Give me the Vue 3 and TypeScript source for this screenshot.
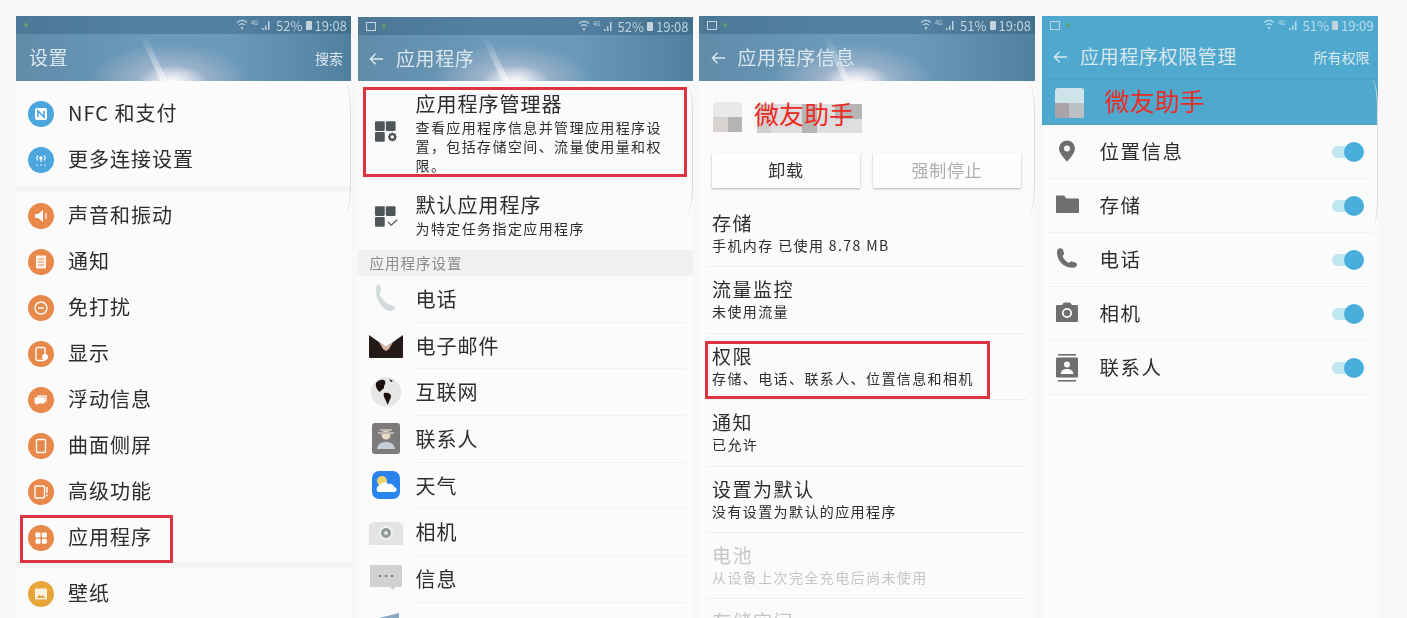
<script setup lang="ts">
type SettingRow = { label: string; icon: string; tone: 'blue' | 'orange' | 'amber' }
type AppRow = { label: string; icon: string }
type InfoRow = { title: string; sub: string; off?: boolean }

const settingGroups: SettingRow[][] = [
  [
    { label: 'NFC 和支付', icon: 'nfc', tone: 'blue' },
    { label: '更多连接设置', icon: 'more', tone: 'blue' },
  ],
  [
    { label: '声音和振动', icon: 'sound', tone: 'orange' },
    { label: '通知', icon: 'notify', tone: 'orange' },
    { label: '免打扰', icon: 'dnd', tone: 'orange' },
    { label: '显示', icon: 'display', tone: 'orange' },
    { label: '浮动信息', icon: 'float', tone: 'orange' },
    { label: '曲面侧屏', icon: 'edge', tone: 'orange' },
    { label: '高级功能', icon: 'advanced', tone: 'orange' },
    { label: '应用程序', icon: 'apps', tone: 'orange' },
  ],
  [{ label: '壁纸', icon: 'wallpaper', tone: 'amber' }],
]

const appRows: AppRow[] = [
  { label: '电话', icon: 'phone' },
  { label: '电子邮件', icon: 'mail' },
  { label: '互联网', icon: 'globe' },
  { label: '联系人', icon: 'contact' },
  { label: '天气', icon: 'weather' },
  { label: '相机', icon: 'camera' },
  { label: '信息', icon: 'message' },
  { label: '', icon: 'partial' },
]

const infoRows: InfoRow[] = [
  { title: '存储', sub: '手机内存 已使用 8.78 MB' },
  { title: '流量监控', sub: '未使用流量' },
  { title: '权限', sub: '存储、电话、联系人、位置信息和相机' },
  { title: '通知', sub: '已允许' },
  { title: '设置为默认', sub: '没有设置为默认的应用程序' },
  { title: '电池', sub: '从设备上次完全充电后尚未使用', off: true },
  { title: '存储空间', sub: '', off: true },
]

const permRows: AppRow[] = [
  { label: '位置信息', icon: 'pin' },
  { label: '存储', icon: 'folder' },
  { label: '电话', icon: 'call' },
  { label: '相机', icon: 'cam' },
  { label: '联系人', icon: 'book' },
]

// wifi fan, tiny 4G tag and signal steps
const statusIcons =
  '<g fill="none" stroke="currentColor" stroke-width="1.1"><path d="M1 3.5c3-2.5 7-2.5 10 0M3 6c2-1.5 4-1.5 6 0"/></g>' +
  '<path d="M6 11L4.5 8h3z" fill="currentColor"/>' +
  '<text x="15" y="6" font-size="6" fill="currentColor">4G</text>' +
  '<path d="M26 11h1.5V9H26zM29 11h1.5V6.5H29zM32 11h1.5V2H32z" fill="currentColor"/>'

const glyphs: Record<string, string> = {
  nfc: '<rect x="7" y="7" width="12" height="12" rx="2" fill="#fff"/><path d="M10 16v-6l6 6v-6" fill="none" stroke="#4aa6dc" stroke-width="1.6"/>',
  more: '<g fill="none" stroke="#fff" stroke-width="1.1"><path d="M10 8.5c-1.5 1.5-1.5 3.5 0 5M16 8.5c1.5 1.5 1.5 3.5 0 5"/><circle cx="13" cy="11" r="1.2" fill="#fff"/><path d="M13 12v3"/><path d="M8.5 18h1M12.5 18h1M16.5 18h1" stroke-width="1.4"/></g>',
  sound: '<path d="M7 11h3l5-4v12l-5-4H7z" fill="#fff"/><rect x="17" y="10" width="2" height="6" fill="#fff" opacity=".6"/>',
  notify: '<rect x="8" y="6.5" width="10" height="13" rx="1" fill="#fff" opacity=".9"/><path d="M10 10h6M10 13h6M10 16h6" stroke="#e8884a" stroke-width="1"/>',
  dnd: '<circle cx="13" cy="13" r="6" fill="none" stroke="#fff" stroke-width="1.4"/><path d="M10 13h6" stroke="#fff" stroke-width="1.4"/>',
  display: '<rect x="8" y="6.5" width="9" height="13" rx="1.5" fill="none" stroke="#fff" stroke-width="1.4"/><circle cx="17" cy="16" r="3" fill="#fff"/>',
  float: '<rect x="9" y="8" width="10" height="7" fill="#fff" opacity=".65"/><path d="M6.5 10.5h10v6h-6l-2 2v-2h-2z" fill="#fff"/>',
  edge: '<rect x="8.5" y="6.5" width="9" height="13" rx="1" fill="none" stroke="#fff" stroke-width="1.4"/>',
  advanced: '<rect x="7" y="7" width="9.5" height="12" rx="1" fill="none" stroke="#fff" stroke-width="1.4"/><path d="M19 8v6" stroke="#fff" stroke-width="1.4"/><circle cx="19" cy="16.5" r=".9" fill="#fff"/>',
  apps: '<g fill="#fff"><rect x="7.5" y="7.5" width="5" height="5" rx="1"/><rect x="13.8" y="7.5" width="5" height="5" rx="1"/><rect x="7.5" y="13.8" width="5" height="5" rx="1"/><rect x="13.8" y="13.8" width="5" height="5" rx="1"/></g>',
  wallpaper: '<rect x="7" y="7.5" width="12" height="11" rx="1" fill="#fff" opacity=".85"/><path d="M8.5 17l3-3.5 2 2 1.5-1.5 2.5 3z" fill="#e8a63a"/>',
  phone: '<path d="M8 3c3-1 3 1 4 4 .8 3-2 3-1 6 1 3 4 6 8 9 3 2 5 1 7 3 1 2-2 4-5 4C12 28 4 13 8 3z" fill="#d3dcdd"/>',
  mail: '<path d="M0 6l17 12L34 6v22a1 1 0 0 1-1 1H1a1 1 0 0 1-1-1z" fill="#241a1a"/><path d="M10 13l7 5 7-5-4 7-3 2-3-2z" fill="#d8b8a4"/>',
  globe: '<circle cx="17" cy="16" r="15" fill="#e6e6e6"/><path d="M7 7c3-4 8-4 9-2 1 3-1 4-1 6 0 3-3 2-4 5-2-1-5-5-4-9zM15 17c4-1 7 1 7 3 0 3-2 4-3 9-2-3-2-5-3-6-1-2-2-4-1-6zM20 3l4 2-2 1z" fill="#1e0d0f"/>',
  contact: '<rect x="3" y="1" width="28" height="31" rx="3" fill="#7c7a7a"/><circle cx="17" cy="13" r="4.5" fill="#e8dcc8"/><path d="M9 11h16M11 8h12" stroke="#bcb6b0" stroke-width="2"/><path d="M8 27c1-6 5-7 9-7s8 1 9 7z" fill="#c6ced8"/>',
  weather: '<rect x="3" y="2" width="28" height="28" rx="7" fill="#2a84ee"/><circle cx="13" cy="12" r="5" fill="#f2d36a"/><path d="M9 23a4 4 0 0 1 2-7c1-3 6-4 8-1 3-1 6 1 6 3 3 0 4 5 0 5z" fill="#fff"/>',
  camera: '<path d="M0 8l6-2h22l6 2v20a1 1 0 0 1-1 1H1a1 1 0 0 1-1-1z" fill="#e3e3e1"/><circle cx="17" cy="17" r="7" fill="#f2f2f0"/><circle cx="17" cy="17" r="5" fill="#8e9a98"/><circle cx="17" cy="17" r="2" fill="#dfe6e4"/>',
  message: '<path d="M1 3h32v22h-7l-2 3-3-3H1z" fill="#d2d0d3"/><g fill="#555"><circle cx="11" cy="14" r="1"/><circle cx="17" cy="14" r="1"/><circle cx="23" cy="14" r="1"/></g>',
  partial: '<path d="M10 9l20-5v20H10z" fill="#8aa7c4"/>',
  pin: '<path d="M12 2.5a8 8 0 0 0-8 8c0 5.5 8 13 8 13s8-7.5 8-13a8 8 0 0 0-8-8zm0 11a3 3 0 1 1 0-6 3 3 0 0 1 0 6z" fill="#6f6f6f"/>',
  folder: '<path d="M1 4.5a1 1 0 0 1 1-1h7l2.5 3H23a1 1 0 0 1 1 1V20a1 1 0 0 1-1 1H2a1 1 0 0 1-1-1z" fill="#6f6f6f"/>',
  call: '<path d="M3 3c2-1.5 4-1 5 1l1 3c.3 1.3-.5 2-1.5 3 1 3 3.5 5.5 6.5 7 1-1 2-2 3-1.6l3.5 1.100c1.5.5 2 2 1 3.5-1 1.600-3 2-5.500 1.400C9 22 2 14 2 7c0-1.500.3-3 1-4z" fill="#6f6f6f"/>',
  cam: '<path d="M2 5h5l2-2.5h6L17 5h5a1 1 0 0 1 1 1v15a1 1 0 0 1-1 1H2a1 1 0 0 1-1-1V6a1 1 0 0 1 1-1z" fill="#6f6f6f"/><circle cx="12" cy="13" r="4.2" fill="none" stroke="#fbfbfb" stroke-width="1.8"/>',
  book: '<rect x="3" y="0" width="18" height="1.6" fill="#6f6f6f"/><rect x="3" y="26" width="18" height="1.6" fill="#6f6f6f"/><rect x="1" y="3.5" width="22" height="20" rx="1" fill="#6f6f6f"/><circle cx="12" cy="10.5" r="3" fill="#fbfbfb"/><path d="M5.5 20c.5-4 3.5-5 6.5-5s6 1 6.5 5z" fill="#fbfbfb"/>',
}
</script>

<template>
  <div class="page">
    <!-- settings list -->
    <section class="panel">
      <div class="screen">
        <header class="bar sky">
          <div class="status">
            <i class="dot"></i>
            <span class="status-right">
              <svg class="wifi" viewBox="0 0 36 12" v-html="statusIcons"></svg>
              <span>52%</span><i class="batt"></i><span>19:08</span>
            </span>
          </div>
          <div class="title-row first-title">
            <span class="title">设置</span>
            <span class="action">搜索</span>
          </div>
        </header>
        <div class="settings">
          <div v-for="(group, g) in settingGroups" :key="g" class="group">
            <div v-for="row in group" :key="row.label" class="setting">
              <svg class="badge" :class="row.tone" viewBox="0 0 26 26" v-html="glyphs[row.icon]"></svg>
              <span class="setting-label">{{ row.label }}</span>
            </div>
          </div>
        </div>
      </div>
      <i class="curve curve-settings"></i>
      <div class="mark mark-apps"></div>
    </section>

    <!-- applications -->
    <section class="panel panel-low">
      <div class="screen">
        <header class="bar sky bar-low">
          <div class="status">
            <i class="shot"></i><i class="dot"></i>
            <span class="status-right">
              <svg class="wifi" viewBox="0 0 36 12" v-html="statusIcons"></svg>
              <span>52%</span><i class="batt"></i><span>19:08</span>
            </span>
          </div>
          <div class="title-row">
            <svg class="back" viewBox="0 0 16 14"><path d="M15 7H2M7 1.5L1.5 7 7 12.5" fill="none" stroke="#dce8ee" stroke-width="1.5"/></svg>
            <span class="title">应用程序</span>
          </div>
        </header>
        <div class="manager">
          <div class="tile-slot">
            <svg class="tiles" viewBox="0 0 24 20">
              <g fill="#4f5659"><rect x="0" y="0" width="9" height="9" rx="1"/><rect x="10" y="0" width="9" height="9" rx="1"/><rect x="0" y="10" width="9" height="9" rx="1"/></g>
              <circle cx="16" cy="14.5" r="2.6" fill="none" stroke="#4f5659" stroke-width="2"/>
              <path d="M16 10.5v1.2M16 17.5v1.2M12 14.5h1.2M18.8 14.5H20M13.2 11.7l.9.9M18 16.5l.9.9M13.2 17.3l.9-.9M18 12.5l.9-.9" stroke="#4f5659" stroke-width="1.2"/>
            </svg>
          </div>
          <div class="manager-text">
            <div class="big">应用程序管理器</div>
            <div class="small">查看应用程序信息并管理应用程序设置，包括存储空间、流量使用量和权限。</div>
          </div>
        </div>
        <div class="manager default">
          <div class="tile-slot">
            <svg class="tiles" viewBox="0 0 24 20">
              <g fill="#4f5659"><rect x="0" y="0" width="9" height="9" rx="1"/><rect x="10" y="0" width="9" height="9" rx="1"/><rect x="0" y="10" width="9" height="9" rx="1"/></g>
              <path d="M12 14.5l3 3 5.5-5" fill="none" stroke="#4f5659" stroke-width="1.2"/>
            </svg>
          </div>
          <div class="manager-text">
            <div class="big">默认应用程序</div>
            <div class="small">为特定任务指定应用程序</div>
          </div>
        </div>
        <div class="section-head">应用程序设置</div>
        <div v-for="row in appRows" :key="row.icon" class="app-row">
          <svg class="app-icon" viewBox="0 0 34 34" v-html="glyphs[row.icon]"></svg>
          <span class="app-label">{{ row.label }}</span>
        </div>
      </div>
      <i class="curve curve-manager"></i>
      <div class="mark mark-manager"></div>
    </section>

    <!-- application info -->
    <section class="panel">
      <div class="screen">
        <header class="bar sky">
          <div class="status">
            <i class="shot"></i><i class="dot"></i>
            <span class="status-right">
              <svg class="wifi" viewBox="0 0 36 12" v-html="statusIcons"></svg>
              <span>51%</span><i class="batt"></i><span>19:08</span>
            </span>
          </div>
          <div class="title-row">
            <svg class="back" viewBox="0 0 16 14"><path d="M15 7H2M7 1.5L1.5 7 7 12.5" fill="none" stroke="#dce8ee" stroke-width="1.5"/></svg>
            <span class="title">应用程序信息</span>
          </div>
        </header>
        <div class="app-head">
          <div class="app-thumb"><i></i><i></i></div>
          <div class="mosaic"><i></i><i></i><i></i></div>
        </div>
        <div class="buttons">
          <div class="btn">卸载</div>
          <div class="btn off">强制停止</div>
        </div>
        <div class="info-list">
          <div v-for="row in infoRows" :key="row.title" class="info-row" :class="{ off: row.off }">
            <div class="info-title">{{ row.title }}</div>
            <div class="info-sub">{{ row.sub }}</div>
          </div>
        </div>
      </div>
      <i class="curve curve-info"></i>
      <div class="stamp stamp-info">微友助手</div>
      <div class="mark mark-perm"></div>
    </section>

    <!-- permission manager -->
    <section class="panel">
      <div class="screen">
        <header class="bar flat">
          <div class="status">
            <i class="shot"></i><i class="dot"></i>
            <span class="status-right">
              <svg class="wifi" viewBox="0 0 36 12" v-html="statusIcons"></svg>
              <span>51%</span><i class="batt"></i><span>19:09</span>
            </span>
          </div>
          <div class="title-row title-perm">
            <svg class="back" viewBox="0 0 16 14"><path d="M15 7H2M7 1.5L1.5 7 7 12.5" fill="none" stroke="#dce8ee" stroke-width="1.5"/></svg>
            <span class="title">应用程序权限管理</span>
            <span class="action">所有权限</span>
          </div>
          <div class="sub-bar">
            <div class="app-thumb thumb-blue"><i></i><i></i></div>
          </div>
        </header>
        <div v-for="row in permRows" :key="row.icon" class="perm-row">
          <svg class="perm-icon" viewBox="0 0 24 28" v-html="glyphs[row.icon]"></svg>
          <span class="perm-label">{{ row.label }}</span>
          <span class="toggle"><i></i></span>
        </div>
      </div>
      <i class="curve curve-perm"></i>
      <div class="stamp stamp-perm">微友助手</div>
    </section>
  </div>
</template>

<style>
html,
body {
  margin: 0;
  background: #f8f8f8;
}
</style>

<style scoped>
.page {
  height: 618px;
  box-sizing: border-box;
  padding: 16px 0 0 16px;
  display: grid;
  grid-template-columns: 335px 335px 336px 336px;
  column-gap: 6.5px;
  overflow: hidden;
  font-family: "Noto Sans CJK SC", "Noto Sans", sans-serif;
  color: #2b2e30;
  background: #f8f8f8;
}
.panel {
  position: relative;
  height: 602px;
  overflow: hidden;
  background: #fbfbfb;
}
.screen {
  height: 100%;
  filter: blur(0.35px);
}
.panel-low .screen {
  padding-top: 1px;
  box-sizing: border-box;
}

/* top bars */
.bar {
  color: #dbe7ee;
}
.sky {
  position: relative;
  height: 65px;
  background:
    radial-gradient(ellipse 34px 16px at 47% 100%, rgba(255, 255, 255, 0.92), rgba(255, 255, 255, 0) 100%),
    radial-gradient(ellipse 80px 38px at 46% 100%, rgba(222, 214, 228, 0.7), rgba(222, 214, 228, 0) 100%),
    linear-gradient(90deg, #608ba9, #6c9aba 40%, #6b99b9 65%, #50809f);
}
.sky::after {
  content: "";
  position: absolute;
  left: 40%;
  top: 20px;
  width: 7px;
  height: 45px;
  transform: skewX(25deg);
  background: linear-gradient(180deg, rgba(255, 255, 255, 0), rgba(255, 255, 255, 0.55));
}
.bar-low {
  height: 64px;
}
.flat {
  background: #4fa9cf;
}
.status {
  height: 18px;
  display: flex;
  align-items: center;
  gap: 6px;
  padding: 0 4px 0 8px;
  font-size: 13px;
  color: #bfd2dd;
  background: rgba(40, 84, 116, 0.35);
}
.flat .status {
  background: none;
  color: #b8dcea;
}
.status-right {
  margin-left: auto;
  display: flex;
  align-items: center;
  gap: 3px;
}
.wifi {
  width: 36px;
  height: 12px;
  margin-right: 1px;
}
.dot {
  width: 4px;
  height: 4px;
  border-radius: 50%;
  background: #5f9f6a;
}
.shot {
  width: 10px;
  height: 9px;
  border: 1px solid #c3d4de;
  box-sizing: border-box;
}
.batt {
  width: 6px;
  height: 9px;
  background: #c3d4de;
  border-radius: 1px;
}
.title-row {
  position: relative;
  z-index: 1;
  height: 47px;
  display: flex;
  align-items: center;
  padding: 0 8px 0 11.5px;
  gap: 12px;
}
.first-title {
  padding-left: 13px;
}
.title {
  font-size: 19px;
  letter-spacing: 0.6px;
  margin-top: -2px;
}
.action {
  margin-left: auto;
  font-size: 14px;
}
.back {
  width: 15px;
  height: 14px;
}

/* settings list */
.settings {
  padding-top: 10px;
}
.group {
  border-bottom: 6px solid #f4f4f4;
  padding-bottom: 3px;
  margin-bottom: 1px;
}
.group:nth-child(2) {
  padding-bottom: 1px;
  margin-bottom: 3px;
}
.setting {
  height: 46px;
  display: flex;
  align-items: center;
  gap: 14px;
  padding-left: 12px;
  font-size: 20px;
  letter-spacing: 1px;
}
.setting-label {
  margin-top: -3px;
}
.badge {
  width: 26px;
  height: 26px;
  border-radius: 50%;
  flex: none;
}
.blue {
  background: #4aa6dc;
}
.orange {
  background: #e8884a;
}
.amber {
  background: #e8a63a;
}

/* applications list */
.manager {
  display: flex;
  height: 105px;
  box-sizing: border-box;
  padding-top: 12px;
}
.default {
  height: 64px;
  padding-top: 8px;
}
.tile-slot {
  width: 58px;
  flex: none;
  display: flex;
  align-items: center;
  justify-content: center;
  height: 78px;
  padding-left: 3px;
  box-sizing: border-box;
}
.default .tile-slot {
  height: 46px;
}
.tiles {
  width: 26px;
  height: 22px;
}
.big {
  font-size: 20px;
  line-height: 24px;
  letter-spacing: 1px;
  margin-top: -1px;
}
.small {
  width: 252px;
  font-size: 14px;
  line-height: 19px;
  letter-spacing: 1.4px;
  margin-top: 2px;
}
.section-head {
  height: 26px;
  line-height: 26px;
  background: #f1f1f1;
  padding-left: 12px;
  font-size: 14.5px;
  letter-spacing: 1px;
  color: #8b8b8b;
}
.app-row {
  height: 46.7px;
  display: flex;
  align-items: center;
  position: relative;
}
.app-row::after {
  content: "";
  position: absolute;
  left: 55px;
  right: 8px;
  bottom: 0;
  border-bottom: 1px solid #f0f0f0;
}
.app-icon {
  width: 34px;
  height: 34px;
  flex: none;
  margin: 0 13px 0 11px;
}
.app-label {
  font-size: 20px;
  letter-spacing: 1px;
  margin-top: -2px;
}

/* application info */
.app-head {
  height: 72px;
  display: flex;
  align-items: center;
  padding-left: 14px;
  gap: 15px;
}
.app-thumb {
  width: 29px;
  height: 30px;
  border-radius: 3px;
  background: linear-gradient(180deg, #e9e9e9 50%, #c8c8c8 50%);
  display: flex;
  align-items: flex-end;
}
.app-thumb i {
  width: 50%;
  height: 50%;
  background: #d8d2d0;
}
.app-thumb i + i {
  background: #b4b4b4;
}
.thumb-blue {
  margin-left: 13px;
  background: linear-gradient(180deg, #cfe3ea 50%, #b9c4c9 50%);
}
.thumb-blue i {
  background: #a9a4a8;
}
.thumb-blue i + i {
  background: #bcc0c4;
}
.mosaic {
  position: relative;
  width: 105px;
  height: 43px;
  background: linear-gradient(180deg, #fbfbfb 18%, #dedede 18%, #dedede 86%, #fbfbfb 86%);
}
.mosaic i {
  position: absolute;
  background: #b5b5b5;
}
.mosaic i:nth-child(1) {
  left: 45px;
  top: 8px;
  width: 15px;
  height: 29px;
}
.mosaic i:nth-child(2) {
  left: 78px;
  top: 8px;
  width: 27px;
  height: 15px;
}
.mosaic i:nth-child(3) {
  left: 0;
  top: 8px;
  width: 14px;
  height: 29px;
  background: #cfcfcf;
}
.buttons {
  display: grid;
  grid-template-columns: 148px 148px;
  column-gap: 13px;
  padding: 0 14px 13px 13px;
}
.btn {
  height: 35px;
  line-height: 33px;
  text-align: center;
  font-size: 17px;
  letter-spacing: 0.8px;
  color: #333;
  background: #fdfdfd;
  box-shadow: 0 1px 2px rgba(0, 0, 0, 0.28);
}
.btn.off {
  color: #aeaeae;
}
.info-list {
  padding: 0 8px;
}
.info-row {
  height: 66.4px;
  box-sizing: border-box;
  padding: 9px 0 0 5px;
  border-bottom: 1px solid #eeeeee;
}
.info-title {
  font-size: 19px;
  line-height: 26px;
  letter-spacing: 1.5px;
}
.info-sub {
  font-size: 14px;
  line-height: 20px;
  letter-spacing: 1.4px;
  margin-top: -1px;
}
.info-row.off {
  color: #c6c6c6;
}

/* permissions */
.title-perm {
  height: 45px;
}
.sub-bar {
  height: 46px;
  display: flex;
  align-items: center;
  border-top: 1px solid #49a2c6;
  box-sizing: border-box;
}
.perm-row {
  height: 54px;
  margin: 0 6px;
  display: flex;
  align-items: center;
  border-bottom: 1px solid #f0f0f0;
  box-sizing: border-box;
}
.perm-icon {
  width: 26px;
  height: 28px;
  margin: 0 20px 0 6px;
  flex: none;
}
.perm-label {
  font-size: 19.5px;
  letter-spacing: 1.5px;
  margin-top: -2px;
}
.toggle {
  margin-left: auto;
  margin-right: 8px;
  width: 32px;
  height: 12px;
  border-radius: 6px;
  background: #c0e6ef;
  position: relative;
}
.toggle i {
  position: absolute;
  right: 0;
  top: -4px;
  width: 20px;
  height: 20px;
  border-radius: 50%;
  background: #4aaedc;
}

/* overlays */
.mark {
  position: absolute;
  box-sizing: border-box;
  border: 3px solid #dc3440;
}
.mark-apps {
  left: 4px;
  top: 499px;
  width: 153px;
  height: 48px;
}
.mark-manager {
  left: 5px;
  top: 71px;
  width: 324px;
  height: 90px;
}
.mark-perm {
  left: 6px;
  top: 325px;
  width: 285px;
  height: 58px;
}
.stamp {
  position: absolute;
  font-size: 25px;
  line-height: 30px;
  color: #ee2a22;
}
.stamp-info {
  left: 55px;
  top: 82px;
}
.stamp-perm {
  left: 63px;
  top: 69px;
}
.curve {
  position: absolute;
  right: 0;
  width: 6px;
  border-right: 1px solid #dcdcdc;
  border-radius: 0 6px 6px 0 / 0 30px 30px 0;
}
.curve-settings,
.curve-manager,
.curve-info {
  top: 68px;
  height: 130px;
}
.curve-perm {
  top: 64px;
  height: 148px;
}
</style>
